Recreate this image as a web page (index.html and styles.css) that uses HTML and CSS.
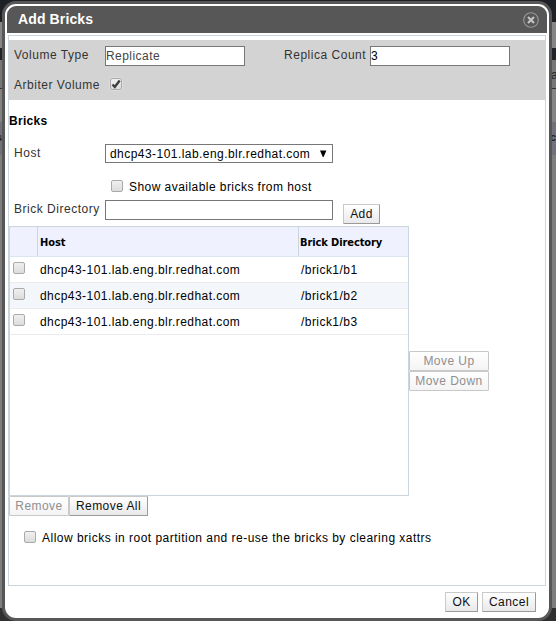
FILE: index.html
```html
<!DOCTYPE html>
<html lang="en">
<head>
<meta charset="utf-8">
<title>Add Bricks</title>
<link rel="stylesheet" href="styles.css">
</head>
<body>
<div class="behind"><span class="frag frag-a">a</span><span class="frag frag-co">co</span><span class="frag frag-s">s</span></div>
<div class="dialog">
  <header class="titlebar">
    <h1>Add Bricks</h1>
    <svg class="close" width="16" height="16" viewBox="0 0 16 16"><circle cx="8" cy="8" r="7.3" fill="none" stroke="#999" stroke-width="1.1"/><path d="M5 5l6 6M11 5l-6 6" stroke="#c4c4c4" stroke-width="2.2"/></svg>
  </header>
  <main class="content">
    <section class="volume">
      <div class="line">
        <label class="label">Volume Type</label><input class="field short dim" value="Replicate">
        <label class="label replica">Replica Count</label><input class="field short" value="3">
      </div>
      <div class="line arbiter"><label class="label">Arbiter Volume</label><span class="ring"><span class="check"><svg width="10" height="10" viewBox="0 0 10 10"><path d="M1.5 5.5l2.3 2.5L8.7 1.5" fill="none" stroke="#3d3d3d" stroke-width="2.4"/></svg></span></span></div>
    </section>
    <h2>Bricks</h2>
    <div class="line host"><label class="label">Host</label><div class="select"><span class="hostname">dhcp43-101.lab.eng.blr.redhat.com</span><svg width="7" height="7" viewBox="0 0 7 7"><path d="M0 .5h6.4L3.6 7h-.8z" fill="#000"/></svg></div></div>
    <div class="show"><span class="check"></span><span class="showtext">Show available bricks from host</span></div>
    <div class="line dir"><label class="label dirlabel">Brick Directory</label><input class="field long"><button class="btn add">Add</button></div>
    <div class="tablearea">
      <div class="table">
        <div class="row head"><div class="c1"></div><div class="c2">Host</div><div class="c3">Brick Directory</div></div>
        <div class="row"><div class="c1"><span class="check"></span></div><div class="c2">dhcp43-101.lab.eng.blr.redhat.com</div><div class="c3">/brick1/b1</div></div>
        <div class="row even"><div class="c1"><span class="check"></span></div><div class="c2">dhcp43-101.lab.eng.blr.redhat.com</div><div class="c3">/brick1/b2</div></div>
        <div class="row"><div class="c1"><span class="check"></span></div><div class="c2">dhcp43-101.lab.eng.blr.redhat.com</div><div class="c3">/brick1/b3</div></div>
      </div>
      <div class="moves"><button class="btn" disabled>Move Up</button><button class="btn" disabled>Move Down</button></div>
    </div>
    <div class="removes"><button class="btn remove" disabled>Remove</button><button class="btn removeall">Remove All</button></div>
    <div class="allow"><span class="check"></span><span class="allowtext">Allow bricks in root partition and re-use the bricks by clearing xattrs</span></div>
  </main>
  <footer><button class="btn ok">OK</button><button class="btn cancel">Cancel</button></footer>
</div>
</body>
</html>
```
FILE: styles.css
```css
* { box-sizing: border-box; }
body {
  margin: 0;
  width: 556px;
  height: 621px;
  overflow: hidden;
  font: 12px/16px "Liberation Sans", Arial, sans-serif;
  letter-spacing: 0.45px;
  color: #000;
  padding: 1px 4px 0 2px;
}
.behind {
  position: absolute;
  inset: 0;
  z-index: -1;
  overflow: hidden;
  background: linear-gradient(#1d2025 0 22px, #858585 22px 48px, #202328 48px 60px, #777 60px 88px, #333 88px 89px, #838383 89px 122px, #70717a 122px 155px, #7e7e7e 155px 608px, #303030 608px);
}
.frag { position: absolute; color: #222; }
.frag-a { left: 551px; top: 67px; }
.frag-co { left: 550px; top: 129px; font-weight: bold; font-size: 11px; }
.frag-s { left: -4px; top: 129px; font-weight: bold; font-size: 11px; }
.dialog {
  height: 620px;
  border: 3px solid #575757;
  border-radius: 14px;
  background: #fff;
  padding: 2px 2px 0;
  display: flex;
  flex-direction: column;
}
.titlebar {
  height: 27px;
  flex: none;
  background: #575757;
  border-radius: 9px 9px 0 0;
  display: flex;
  justify-content: space-between;
  padding: 5px 8px 0 11px;
}
h1 { margin: 0; font-size: 14px; line-height: 16px; color: #fff; letter-spacing: 0.12px; }
.close { margin-top: 1px; }
.content {
  margin: 2px 1px 0;
  height: 551px;
  flex: none;
  border: 1px solid #cad5dc;
  padding-top: 4px;
}
.volume { height: 60px; background: #d3d3d3; padding: 6px 0 0 5px; }
.line { display: flex; align-items: flex-start; }
.label { width: 91px; flex: none; color: #333; white-space: nowrap; padding-top: 1px; letter-spacing: 0.52px; }
.replica { width: 86px; margin-left: 39px; }
.field {
  height: 20px;
  border: 1px solid #777;
  background: #fff;
  font: inherit;
  letter-spacing: inherit;
  padding: 0;
  color: #000;
  margin: 0;
}
.dim { color: #444; }
.short { width: 140px; }
.long { width: 228px; }
.arbiter { margin-top: 10px; }
.check {
  display: block;
  flex: none;
  width: 12px;
  height: 12px;
  border: 1px solid #aaa;
  border-radius: 2px;
  background: linear-gradient(#f0f0f0, #dcdcdc);
}
.check svg { display: block; }
.ring { margin: 1px 0 0 4px; border: 1px solid #ddd; border-radius: 3px; background: #e4e4e4; }
h2 { margin: 13px 0 0; font-size: 12px; line-height: 16px; letter-spacing: 0.3px; }
.host { margin: 15px 0 0 5px; }
.select {
  width: 228px;
  height: 19px;
  border: 1px solid #777;
  display: flex;
  justify-content: space-between;
  padding: 1px 5px 0 4px;
}
.select svg { margin-top: 4px; }
.show { display: flex; margin: 17px 0 0 102px; }
.showtext { margin: -1px 0 0 6px; }
.dir { margin: 5px 0 0 5px; }
.btn {
  height: 20px;
  border: 1px solid #c9c9c9;
  border-right-color: #999;
  border-bottom-color: #999;
  border-radius: 1px;
  background: linear-gradient(#fff, #e9e9ec);
  font: inherit;
  letter-spacing: inherit;
  color: #111;
  padding: 0;
  margin: 0;
  white-space: nowrap;
}
.btn:disabled { color: #8f8f8f; border-color: #c8c8c8; background: linear-gradient(#fff, #f4f4f6); }
.add { width: 37px; margin: 4px 0 0 10px; }
.tablearea { display: flex; margin-top: 2px; }
.table { width: 400px; height: 270px; border: 1px solid #cad5dc; }
.row { height: 26px; display: flex; border-bottom: 1px solid #ebebeb; }
.row > div { white-space: nowrap; }
.even { background: #f3f7fb; }
.c1 { width: 28px; padding: 5px 0 0 3px; }
.c2 { width: 261px; padding: 5px 0 0 2px; }
.c3 { padding: 5px 0 0 2px; }
.head {
  height: 30px;
  background: #eff1ff;
  border-bottom-color: #dae7f2;
  font: bold 11px/16px "DejaVu Sans Condensed", sans-serif;
  letter-spacing: -0.1px;
}
.head .c1, .head .c2 { border-right: 1px solid #cad5dc; }
.head > div { padding-top: 8px; padding-left: 1px; }
.head > .c2 { padding-left: 2px; }
.moves { width: 80px; padding-top: 125px; display: flex; flex-direction: column; }
.removes { display: flex; }
.remove { width: 60px; }
.removeall { width: 79px; }
.allow { display: flex; margin: 15px 0 0 15px; }
.allowtext { margin: -1px 0 0 6px; letter-spacing: 0.48px; }
footer { display: flex; justify-content: flex-end; gap: 4px; padding: 6px 11px 0 0; }
.ok { width: 33px; }
.cancel { width: 54px; }
```
